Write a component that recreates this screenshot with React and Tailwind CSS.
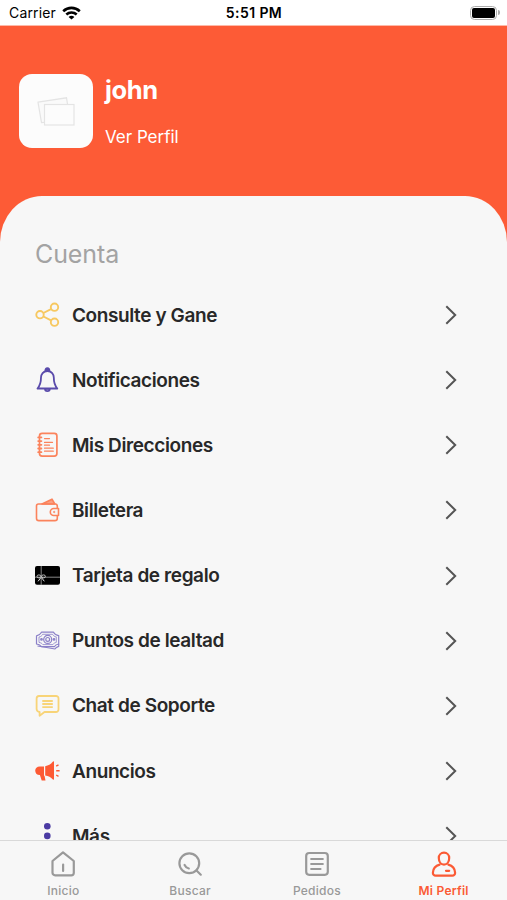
function ShareIcon() {
  return (
    <svg viewBox="0 0 26 26" className="size-[26px]" fill="none" stroke="#f7c860" strokeWidth="1.9">
      <circle cx="5" cy="12.7" r="3.700" />
      <circle cx="19.500" cy="5.200" r="3.700" />
      <circle cx="19.500" cy="20.200" r="3.700" />
      <path d="M8.400 11 16 7.100M8.400 14.500l7.600 3.900" />
    </svg>
  );
}

function BellIcon() {
  return (
    <svg viewBox="0 0 26 26" className="size-[26px]" fill="none" stroke="#5a4bab" strokeWidth="1.800" strokeLinejoin="round">
      <path d="M10.700 3.800a1.900 1.900 0 1 1 3.400 0Z" fill="#5a4bab" />
      <path d="M12.400 4C8.200 4 6 7.300 6 10.600c0 5.400-.9 8-3.500 10.900h19.800c-2.600-2.900-3.500-5.500-3.500-10.900C18.800 7.300 16.600 4 12.400 4Z" />
      <path d="M10 21.800a2.400 2.400 0 0 0 4.800 0Z" />
    </svg>
  );
}

function NotebookIcon() {
  return (
    <svg viewBox="0 0 26 26" className="size-[26px]" fill="none" stroke="#fb835c" strokeWidth="1.700" strokeLinecap="round">
      <rect x="4.500" y="1.400" width="17.400" height="22.800" rx="2.600" />
      <path d="M3.200 5.400h3.200M3.200 9.100h3.200M3.200 12.800h3.200M3.200 16.500h3.200M3.200 20.200h3.200" strokeWidth="1.800" />
      <path d="M9.500 6.600h5M9.500 10.400h8M9.500 13.200h5M9.500 16.200h8.800M9.500 19.200h8.800" strokeWidth="1.200" />
    </svg>
  );
}

function WalletIcon() {
  return (
    <svg viewBox="0 0 26 26" className="size-[26px]" fill="none" stroke="#fb835c" strokeWidth="1.600" strokeLinejoin="round">
      <path d="M7 7 17 2.200 19.800 7Z" fill="#fb835c" fillOpacity=".75" />
      <path d="M22.300 11.300V9.200A2.200 2.200 0 0 0 20.100 7H3.500a2 2 0 0 0-2 2v12.200a2.400 2.400 0 0 0 2.400 2.400h16a2.400 2.400 0 0 0 2.400-2.400v-2.800" />
      <path d="M23.500 11.500h-4.700a3.500 3.500 0 0 0 0 7h4.700Z" />
      <circle cx="19.200" cy="15" r=".7" strokeWidth="1" />
    </svg>
  );
}

function GiftCardIcon() {
  return (
    <svg viewBox="0 0 26 26" className="size-[26px]" fill="none">
      <rect x="0" y="3" width="25" height="18.800" rx="2" fill="#000" />
      <path d="M6.200 3v18.800M0 14.200h25" stroke="#aaa" strokeWidth=".8" />
      <ellipse cx="3.900" cy="13.400" rx="1.900" ry="1.500" stroke="#ddd" strokeWidth=".8" />
      <ellipse cx="8.500" cy="13.400" rx="1.900" ry="1.500" stroke="#ddd" strokeWidth=".8" />
      <path d="m5.800 14.700-2.700 3.600M6.600 14.700l2.700 3.600" stroke="#ddd" strokeWidth="1" />
    </svg>
  );
}

function PointsIcon() {
  return (
    <svg viewBox="0 0 26 26" className="size-[26px]" fill="none" stroke="#8b80c8" strokeWidth="1.200" strokeLinejoin="round">
      <path d="M6.500 4.200h12c1.200 2.200 3.200 3.200 5.200 3.400V16c-2 .3-3.500 1.300-4.400 2.700H6.600C5.200 17.200 3.700 16.200 1.500 16V7.900C4 7.500 5.400 6.200 6.500 4.200Z" />
      <path d="M7.700 6.300h9.800c1 1.700 2 2.300 3.800 2.600v5.500c-1.700.4-2.700 1-3.500 2.200H7.900c-1-1.200-2-1.900-3.900-2.200V9c1.900-.4 2.900-1.100 3.700-2.700Z" strokeWidth=".8" />
      <circle cx="12.700" cy="11.400" r="4" />
      <circle cx="12.700" cy="11.400" r="1.900" />
      <circle cx="6.500" cy="11.400" r=".8" />
      <circle cx="19" cy="11.400" r=".8" />
      <path d="M2.500 18c6 .8 11.500 1.700 17.400 3 .8-1.200 2.200-2 3.800-2.600V16" />
    </svg>
  );
}

function ChatIcon() {
  return (
    <svg viewBox="0 0 26 26" className="size-[26px]" fill="none" stroke="#f8d478" strokeWidth="1.800" strokeLinejoin="round">
      <path d="M4 3h17a2.500 2.500 0 0 1 2.500 2.500v11A2.500 2.500 0 0 1 21 19H9.500l-4.900 3.700V19a3 3 0 0 1-3-3V5.500A2.500 2.500 0 0 1 4 3Z" />
      <path d="M7.300 8h10.500M7.300 11h10.500M7.300 14.100h10.500" />
    </svg>
  );
}

function MegaphoneIcon() {
  return (
    <svg viewBox="0 0 26 26" className="size-[26px]" fill="#fd5a34">
      <path d="M9 8.400v9.200l.6.400.9 4.500H6.700L4.900 17A4.600 4.600 0 0 1 .2 12.800c0-2.600 1.800-4.400 4.600-4.400Z" />
      <path d="M10.200 8.200c3.300-.7 5.900-2.200 7.800-4.600.4-.5 1-.2 1 .5v17c0 .7-.7.900-1.100.4-2-2.500-4.500-3.600-7.700-4Z" />
      <path d="m21.200 8.200 2.300-1.300M21.200 12.700h3.400M21.200 17l2.300 1.300" fill="none" stroke="#fd5a34" strokeWidth="1.400" />
    </svg>
  );
}

function DotsIcon() {
  return (
    <svg viewBox="0 0 26 26" className="size-[26px]" fill="#4b3ba3">
      <circle cx="12.300" cy="3.300" r="3.300" />
      <circle cx="12.300" cy="12.900" r="3.300" />
      <circle cx="12.300" cy="22.500" r="3.300" />
    </svg>
  );
}

const menu = [
  { label: "Consulte y Gane", Icon: ShareIcon },
  { label: "Notificaciones", Icon: BellIcon },
  { label: "Mis Direcciones", Icon: NotebookIcon },
  { label: "Billetera", Icon: WalletIcon },
  { label: "Tarjeta de regalo", Icon: GiftCardIcon },
  { label: "Puntos de lealtad", Icon: PointsIcon },
  { label: "Chat de Soporte", Icon: ChatIcon },
  { label: "Anuncios", Icon: MegaphoneIcon },
  { label: "Más", Icon: DotsIcon },
];

const tabs = [
  {
    label: "Inicio",
    icon: (
      <>
        <path d="M3.500 11 14 2.300 24.800 11v11.700a2.600 2.600 0 0 1-2.600 2.600H6.100a2.600 2.600 0 0 1-2.600-2.600Z" />
        <path d="M14.100 14.500v6.500" />
      </>
    ),
  },
  {
    label: "Buscar",
    icon: (
      <>
        <circle cx="13.300" cy="13.300" r="9.900" />
        <path d="m20.500 20.500 4.300 4.200M8.600 15c.8 1.700 2.200 3 4.200 3.500" />
      </>
    ),
  },
  {
    label: "Pedidos",
    icon: (
      <>
        <rect x="3.200" y="3" width="21.600" height="21.800" rx="3" />
        <path d="M8.200 9h11.600M8.200 14h11.600M8.200 19h9.300" />
      </>
    ),
  },
  {
    label: "Mi Perfil",
    active: true,
    icon: (
      <>
        <path d="M14 2.700c3 0 5.200 2.200 5.200 5.200 0 3.800-2.200 6.700-5.200 6.700s-5.200-2.900-5.200-6.700c0-3 2.200-5.200 5.200-5.200Z" />
        <path d="M9.700 14.600c-3.800 1-6.600 4.100-6.800 8a2.800 2.800 0 0 0 2.800 3.100h16.600a2.800 2.800 0 0 0 2.800-3.100c-.2-3.900-3-7-6.800-8M16 20.800h3.200" />
      </>
    ),
  },
];

function StatusBar() {
  return (
    <div className="grid h-[26px] shrink-0 grid-cols-3 items-center border-b border-[#feb9a8] bg-white pr-[7px] pl-[9px] text-black">
      <div className="flex items-center gap-1.5 text-[14px] tracking-[0.15px]">
        <span>Carrier</span>
        <svg viewBox="0 0 19 14" className="h-[14px] w-[19px]" fill="none" stroke="#000" strokeWidth="2.600">
          <path d="M1.200 5.200C6 .8 13 .8 17.800 5.200" />
          <path d="M4.300 8.500c3-2.700 7.400-2.700 10.400 0" />
          <path d="M9.500 13.600 6.600 10.900c1.700-1.400 4.100-1.400 5.800 0Z" fill="#000" stroke="none" />
        </svg>
      </div>
      <div className="pr-px text-center text-[14px] font-semibold tracking-[0.400px]">5:51 PM</div>
      <div className="flex items-center justify-end gap-px">
        <div className="h-[14px] w-[27px] rounded-[4.500px] border-[1.500px] border-[#adadad] p-[1px]">
          <div className="h-full rounded-[2px] bg-black" />
        </div>
        <div className="h-[5px] w-[2px] rounded-r-full bg-[#adadad]" />
      </div>
    </div>
  );
}

export default function App() {
  return (
    <div className="flex h-[900px] w-[507px] flex-col overflow-hidden bg-[#fd5b36] font-['Inter','Liberation_Sans',sans-serif]">
      <StatusBar />
      <header className="flex h-[170px] shrink-0 gap-3 pt-12 pl-[19px] text-white">
        <div className="flex size-[74px] items-center justify-center rounded-[13px] bg-[#fcfcfc]">
          <svg viewBox="0 0 38 30" className="h-[30px] w-[38px]" stroke="#e4e4e4" strokeWidth="1.200">
            <path d="m1 6.200 28.500-4.400L33 24 4.500 26.500Z" fill="#fafafa" />
            <rect x="7.500" y="8.500" width="29.500" height="20.500" fill="#fcfcfc" />
          </svg>
        </div>
        <div className="flex flex-col">
          <h1 className="text-[25.500px] leading-8 font-bold tracking-[-0.350px]">john</h1>
          <p className="mt-[19px] text-[17px] leading-6 tracking-[-0.020px]">Ver Perfil</p>
        </div>
      </header>

      <main className="min-h-0 flex-1 overflow-hidden rounded-t-[42px_46px] bg-[#f7f7f7] pt-[42px]">
        <h2 className="pl-[35px] text-[25px] leading-8 tracking-[-0.100px] text-[#a3a3a3]">Cuenta</h2>
        <ul className="mt-[12.500px]">
          {menu.map(({ label, Icon }) => (
            <li key={label} className="flex h-[65.150px] items-center pr-[49px] pl-[35px]">
              <Icon />
              <span className="ml-[11px] flex-1 pt-[1.500px] text-[19px] font-semibold tracking-[-0.400px] text-[#282828]">{label}</span>
              <svg viewBox="0 0 14 22" className="h-[22px] w-[14px]" fill="none" stroke="#555" strokeWidth="2">
                <path d="m2.300 2.300 8.900 8.700-8.900 8.700" />
              </svg>
            </li>
          ))}
        </ul>
      </main>

      <nav className="grid h-[60px] shrink-0 grid-cols-4 border-t border-[#d9d9d9] bg-[#f7f7f7]">
        {tabs.map(({ label, icon, active }) => (
          <div
            key={label}
            className={`flex flex-col items-center pt-[9px] ${active ? "text-[#fb5a34]" : "text-[#999]"}`}
          >
            <svg
              viewBox="0 0 28 28"
              className="size-7"
              fill="none"
              stroke="currentColor"
              strokeWidth="2.200"
              strokeLinecap="round"
              strokeLinejoin="round"
            >
              {icon}
            </svg>
            <span className={`mt-[5px] text-[12px] leading-4 tracking-[0.250px] ${active ? "font-semibold" : "font-medium"}`}>
              {label}
            </span>
          </div>
        ))}
      </nav>
    </div>
  );
}
